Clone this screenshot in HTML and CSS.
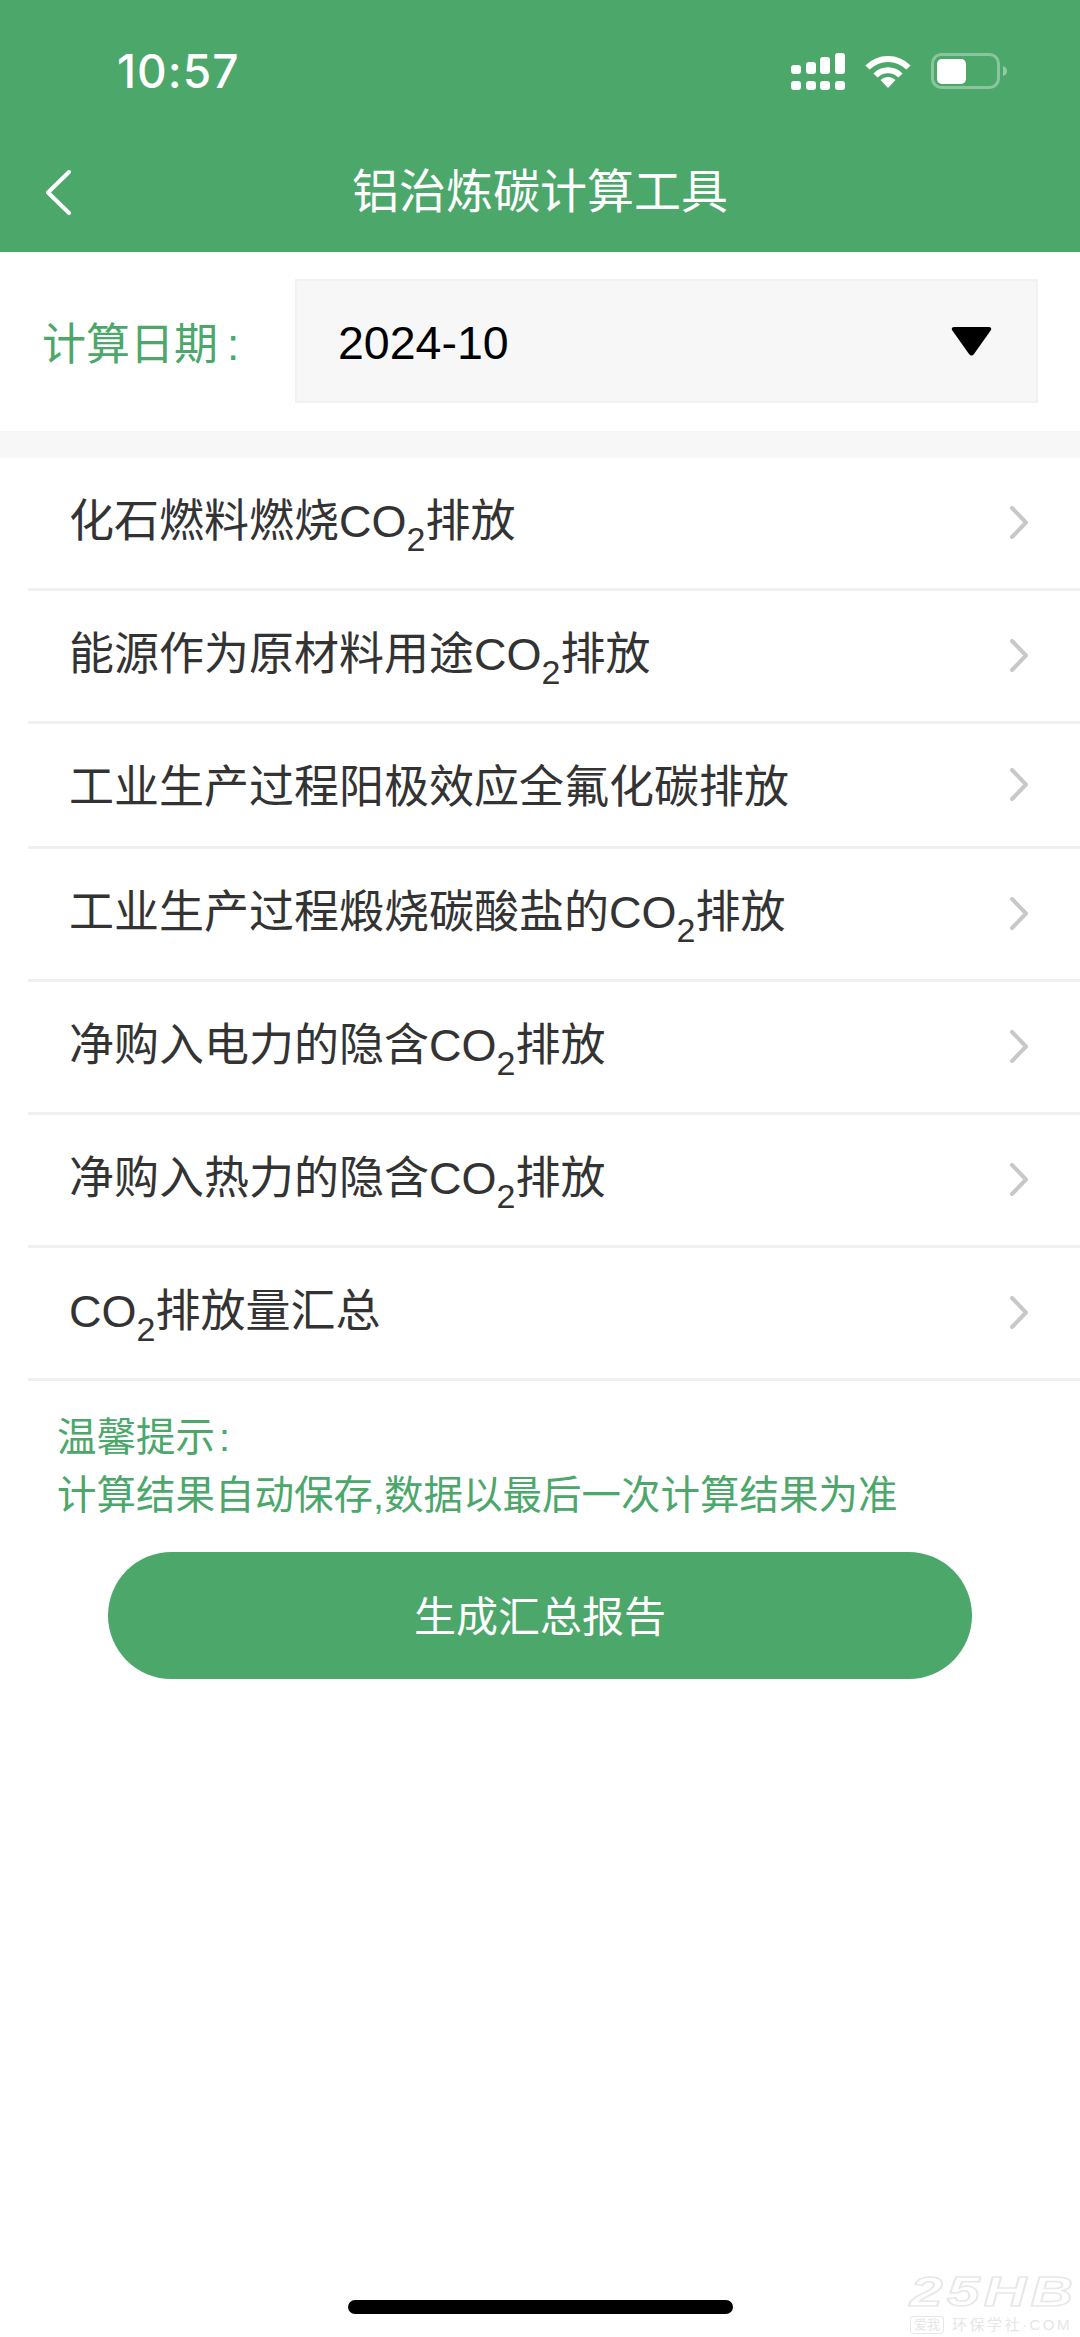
FILE: index.html
```html
<!DOCTYPE html>
<html lang="zh-CN">
<head>
  <meta charset="UTF-8">
  <meta name="viewport" content="width=device-width, initial-scale=1.0">
  <title>铝治炼碳计算工具</title>
  <link rel="stylesheet" href="styles.css">
</head>
<body>
  <div class="page">
    <header class="header">
      <div class="status-bar">
        <span class="time">10:57</span>
        <div class="status-icons">
          <svg class="signal" width="54" height="37" viewBox="0 0 54 37" fill="#fff">
            <rect x="0" y="12" width="10" height="9" rx="3"/>
            <rect x="15" y="9" width="10" height="12" rx="3"/>
            <rect x="29" y="4" width="10" height="17" rx="3"/>
            <rect x="44" y="0" width="10" height="21" rx="3"/>
            <rect x="0" y="28" width="10" height="9" rx="3"/>
            <rect x="15" y="28" width="10" height="9" rx="3"/>
            <rect x="29" y="28" width="10" height="9" rx="3"/>
            <rect x="44" y="28" width="10" height="9" rx="3"/>
          </svg>
          <svg class="wifi" width="46" height="34" viewBox="0 0 46 34" fill="none" stroke="#fff" stroke-width="6">
            <path d="M2.5 13.5C14 2 32 2 43.5 13.5"/>
            <path d="M10.5 21.5C17.5 14.5 28.5 14.5 35.5 21.5"/>
            <path d="M15.5 26 L23 34 L30.5 26 C26 22 20 22 15.5 26Z" fill="#fff" stroke="none"/>
          </svg>
          <svg class="battery" width="76" height="36" viewBox="0 0 76 36">
            <rect x="1.5" y="1.5" width="66" height="33" rx="9" fill="none" stroke="#fff" stroke-opacity=".35" stroke-width="3"/>
            <rect x="6" y="6" width="29" height="25" rx="5" fill="#fff"/>
            <path d="M72 13c3 1 4 3 4 5s-1 4-4 5z" fill="#fff" fill-opacity=".4"/>
          </svg>
        </div>
      </div>
      <div class="nav-bar">
        <svg class="back" width="26" height="45" viewBox="0 0 26 45" fill="none" stroke="#fff" stroke-width="4" stroke-linecap="round" stroke-linejoin="round">
          <path d="M24 2 L3 22.5 L24 43"/>
        </svg>
        <h1 class="title">铝治炼碳计算工具</h1>
      </div>
    </header>

    <section class="date-row">
      <span class="date-label">计算日期<span class="colon">:</span></span>
      <div class="date-select">
        <span class="date-value">2024-10</span>
        <svg width="41" height="29" viewBox="0 0 41 29">
          <path d="M3 0 H38 Q41 0 40 3 L23 27 Q20.5 30 18 27 L1 3 Q0 0 3 0Z" fill="#000"/>
        </svg>
      </div>
    </section>

    <ul class="list">
      <li class="list-item"><span>化石燃料燃烧CO<sub>2</sub>排放</span><svg class="chevron" width="18" height="33" viewBox="0 0 18 33"><path d="M2 2 L16 16.5 L2 31"/></svg></li>
      <li class="list-item"><span>能源作为原材料用途CO<sub>2</sub>排放</span><svg class="chevron" width="18" height="33" viewBox="0 0 18 33"><path d="M2 2 L16 16.5 L2 31"/></svg></li>
      <li class="list-item"><span>工业生产过程阳极效应全氟化碳排放</span><svg class="chevron" width="18" height="33" viewBox="0 0 18 33"><path d="M2 2 L16 16.5 L2 31"/></svg></li>
      <li class="list-item"><span>工业生产过程煅烧碳酸盐的CO<sub>2</sub>排放</span><svg class="chevron" width="18" height="33" viewBox="0 0 18 33"><path d="M2 2 L16 16.5 L2 31"/></svg></li>
      <li class="list-item"><span>净购入电力的隐含CO<sub>2</sub>排放</span><svg class="chevron" width="18" height="33" viewBox="0 0 18 33"><path d="M2 2 L16 16.5 L2 31"/></svg></li>
      <li class="list-item"><span>净购入热力的隐含CO<sub>2</sub>排放</span><svg class="chevron" width="18" height="33" viewBox="0 0 18 33"><path d="M2 2 L16 16.5 L2 31"/></svg></li>
      <li class="list-item"><span>CO<sub>2</sub>排放量汇总</span><svg class="chevron" width="18" height="33" viewBox="0 0 18 33"><path d="M2 2 L16 16.5 L2 31"/></svg></li>
    </ul>

    <p class="tips">温馨提示<span class="colon-small">:</span><br>计算结果自动保存,数据以最后一次计算结果为准</p>

    <button class="report-btn">生成汇总报告</button>

    <div class="home-indicator"></div>

    <div class="watermark">
      <div class="watermark-logo">25HB</div>
      <div class="watermark-sub"><span class="watermark-tag">爱我</span>环保学社·COM</div>
    </div>
  </div>
</body>
</html>
```

FILE: styles.css
```css
:root {
  --green: #4ca76a;
  --text: #333333;
  --line: #f0f0f0;
  --grey-bg: #f7f7f7;
}

* {
  box-sizing: border-box;
}

body {
  margin: 0;
  background: #ffffff;
  font-family: "Liberation Sans", "Noto Sans CJK SC", sans-serif;
  color: var(--text);
}

.page {
  position: relative;
  display: flex;
  flex-direction: column;
  min-height: 2337px;
  overflow: hidden;
}

/* Header */
.header {
  background: var(--green);
  color: #ffffff;
}

.status-bar {
  display: flex;
  align-items: center;
  justify-content: space-between;
  height: 142px;
  padding: 0 73px 0 117px;
}

.time {
  font-family: Inter, "Liberation Sans", sans-serif;
  font-size: 46px;
  font-weight: 500;
  letter-spacing: 1px;
}

.status-icons {
  display: flex;
  align-items: center;
  gap: 20px;
}

.nav-bar {
  position: relative;
  display: flex;
  align-items: center;
  justify-content: center;
  height: 110px;
  padding-bottom: 19px;
}

.back {
  position: absolute;
  left: 45px;
  top: 28px;
}

.title {
  margin: 0;
  font-size: 47px;
  font-weight: 400;
}

/* Date picker */
.date-row {
  display: flex;
  align-items: center;
  padding: 27px 42px 28px 42px;
  border-bottom: 27px solid var(--grey-bg);
}

.date-label {
  width: 253px;
  font-size: 44px;
  color: var(--green);
}

.colon {
  margin-left: 9px;
}

.colon-small {
  margin-left: 4px;
}

.date-select {
  flex: 1;
  display: flex;
  align-items: center;
  justify-content: space-between;
  height: 124px;
  padding: 0 44px 0 41px;
  background: var(--grey-bg);
  border: 2px solid #f2f2f2;
}

.date-value {
  padding-top: 3px;
  font-size: 46.5px;
  color: #000000;
}

/* List */
.list {
  margin: 0;
  padding: 0;
  list-style: none;
}

.list-item {
  display: flex;
  align-items: center;
  justify-content: space-between;
  margin-left: 28px;
  padding: 34px 52px 28px 41px;
  font-size: 45px;
  line-height: 60px;
  border-bottom: 3px solid var(--line);
}

.list-item sub {
  font-size: 34px;
  line-height: 42px;
  vertical-align: -14px;
}

.chevron {
  margin-bottom: 8px;
  fill: none;
  stroke: #c8c8c8;
  stroke-width: 4;
  stroke-linecap: round;
  stroke-linejoin: round;
}

/* Tips + button */
.tips {
  margin: 27px 0 28px;
  padding-left: 57px;
  font-size: 39.5px;
  line-height: 58px;
  color: var(--green);
}

.report-btn {
  align-self: center;
  width: 864px;
  height: 127px;
  padding: 0 0 4px;
  border: none;
  border-radius: 64px;
  background: var(--green);
  color: #ffffff;
  font-family: inherit;
  font-size: 42px;
}

.home-indicator {
  align-self: center;
  width: 385px;
  height: 14px;
  margin-top: auto;
  margin-bottom: 23px;
  border-radius: 7px;
  background: #000000;
}

/* Watermark in the corner */
.watermark {
  position: absolute;
  right: 7px;
  bottom: 3px;
  width: 163px;
}

.watermark-logo {
  font-size: 42px;
  line-height: 48px;
  font-weight: 700;
  font-style: italic;
  letter-spacing: 3px;
  color: #ffffff;
  -webkit-text-stroke: 1.5px #e8e8e8;
  transform: scaleX(1.4);
  transform-origin: left center;
}

.watermark-sub {
  display: flex;
  align-items: center;
  gap: 8px;
  font-size: 15px;
  line-height: 16px;
  letter-spacing: 2.5px;
  color: #e6e6e6;
  white-space: nowrap;
}

.watermark-tag {
  font-size: 13px;
  letter-spacing: 0;
  padding: 0 3px;
  border: 1px solid #e6e6e6;
  border-radius: 3px;
}
```
